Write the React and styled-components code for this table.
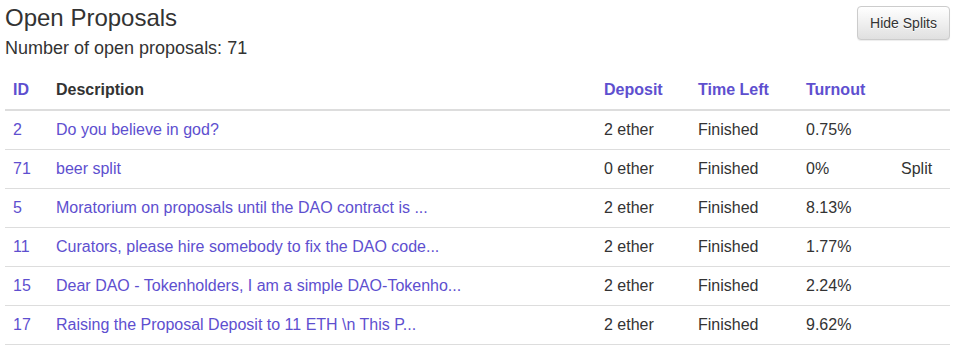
import React from 'react';
import styled, { createGlobalStyle } from 'styled-components';

const GlobalStyle = createGlobalStyle`
  body {
    margin: 0;
    background: #fff;
    font-family: "Liberation Sans", Arial, Helvetica, sans-serif;
    color: #333;
  }
`;

const proposals = [
  { id: 2, description: 'Do you believe in god?', deposit: '2 ether', timeLeft: 'Finished', turnout: '0.75%', split: '' },
  { id: 71, description: 'beer split', deposit: '0 ether', timeLeft: 'Finished', turnout: '0%', split: 'Split' },
  { id: 5, description: 'Moratorium on proposals until the DAO contract is ...', deposit: '2 ether', timeLeft: 'Finished', turnout: '8.13%', split: '' },
  { id: 11, description: 'Curators, please hire somebody to fix the DAO code...', deposit: '2 ether', timeLeft: 'Finished', turnout: '1.77%', split: '' },
  { id: 15, description: 'Dear DAO - Tokenholders, I am a simple DAO-Tokenho...', deposit: '2 ether', timeLeft: 'Finished', turnout: '2.24%', split: '' },
  { id: 17, description: 'Raising the Proposal Deposit to 11 ETH \\n This P...', deposit: '2 ether', timeLeft: 'Finished', turnout: '9.62%', split: '' },
];

function App() {
  return (
    <>
      <GlobalStyle />
      <Page>
        <Top>
          <div>
            <Title>Open Proposals</Title>
            <Count>Number of open proposals: 71</Count>
          </div>
          <Button>Hide Splits</Button>
        </Top>

        <Table>
          <thead>
            <tr>
              <Th sortable $w={27}>ID</Th>
              <Th>Description</Th>
              <Th sortable $w={78}>Deposit</Th>
              <Th sortable $w={92}>Time Left</Th>
              <Th sortable $w={79}>Turnout</Th>
              <Th $w={41}></Th>
            </tr>
          </thead>
          <tbody>
            {proposals.map((p) => (
              <tr key={p.id}>
                <Td><Link href="#">{p.id}</Link></Td>
                <Td><Link href="#">{p.description}</Link></Td>
                <Td>{p.deposit}</Td>
                <Td>{p.timeLeft}</Td>
                <Td>{p.turnout}</Td>
                <Td>{p.split}</Td>
              </tr>
            ))}
          </tbody>
        </Table>
      </Page>
    </>
  );
}

const Page = styled.div`
  padding: 0 5px;
`;

const Top = styled.div`
  display: flex;
  justify-content: space-between;
  align-items: flex-start;
`;

const Title = styled.h3`
  margin: 5px 0 0;
  font-size: 24px;
  font-weight: 400;
  line-height: 26px;
`;

const Count = styled.p`
  margin: 4px 0 0;
  font-size: 18px;
  line-height: 26px;
`;

const Button = styled.button`
  margin-top: 6px;
  padding: 6px 12px;
  font-family: inherit;
  font-size: 14px;
  line-height: 20px;
  color: #333;
  border: 1px solid #ccc;
  border-radius: 4px;
  background-image: linear-gradient(to bottom, #fff 0, #e0e0e0 100%);
  text-shadow: 0 1px 0 #fff;
  box-shadow: inset 0 1px 0 rgba(255, 255, 255, 0.15), 0 1px 1px rgba(0, 0, 0, 0.075);
  cursor: pointer;
`;

const Table = styled.table`
  width: 100%;
  margin-top: 10px;
  border-collapse: collapse;
  border-spacing: 0;
  font-size: 16px;
`;

const Th = styled.th`
  width: ${(p) => (p.$w ? `${p.$w}px` : 'auto')};
  padding: 8px;
  text-align: left;
  line-height: 22px;
  font-weight: 700;
  color: ${(p) => (p.sortable ? '#5e4fcf' : '#333')};
  border-bottom: 2px solid #ddd;
`;

const Td = styled.td`
  padding: 8px;
  line-height: 22px;
  border-bottom: 1px solid #ddd;
  white-space: nowrap;
`;

const Link = styled.a`
  color: #5e4fcf;
  text-decoration: none;
`;

export default App;
